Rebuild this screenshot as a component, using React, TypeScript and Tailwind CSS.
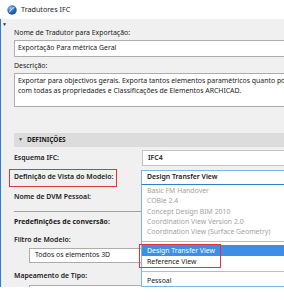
import React from 'react';

export default function App() {
  const items = [
    'Basic FM Handover',
    'COBie 2.4',
    'Concept Design BIM 2010',
    'Coordination View Version 2.0',
    'Coordination View (Surface Geometry)',
  ];

  return (
    <div className="w-[284px] h-[300px] bg-white overflow-hidden text-[6.9px] text-[#1a1a1a]" style={{ fontFamily: '"Noto Sans", "Open Sans", sans-serif' }}>
      {/* title bar */}
      <div className="h-[19px] flex items-center gap-[4px] pl-[7px] bg-white">
        <svg width="10" height="10" viewBox="0 0 10 10">
          <defs>
            <radialGradient id="g" cx="0.35" cy="0.3" r="0.8">
              <stop offset="0" stopColor="#8ec3f5" />
              <stop offset="0.5" stopColor="#2e6fc4" />
              <stop offset="1" stopColor="#173d80" />
            </radialGradient>
          </defs>
          <circle cx="5" cy="5" r="4.7" fill="url(#g)" />
          <path d="M2.6 7.2 C3.6 4.4 5.2 3 7.4 2.6" stroke="#fff" strokeWidth="0.9" fill="none" />
        </svg>
        <span className="text-[7.2px] text-[#222]">Tradutores IFC</span>
      </div>

      {/* body */}
      <div className="relative h-[268px] bg-[#f0f0f0] border-l border-[#2b7bd8]">
        <div className="absolute left-[1px] top-[2px] text-[5px] text-[#333]">▼</div>

        <div className="pl-[13px] pt-[8px] flex flex-col">
          <div className="h-[12px] leading-[12px]">Nome de Tradutor para Exportação:</div>
          <div className="mt-[1px] h-[17px] bg-white border border-[#adadad] border-r-0 flex items-center pl-[3px]">
            Exportação Para métrica Geral
          </div>
          <div className="mt-[3px] h-[12px] leading-[12px]">Descrição:</div>
          <div className="mt-[1px] h-[34px] bg-white border border-[#adadad] border-r-0 pl-[3px] pt-[2px] leading-[10px] whitespace-nowrap overflow-hidden">
            <div>Exportar para objectivos gerais. Exporta tantos elementos paramétricos quanto po</div>
            <div>com todas as propriedades e Classificações de Elementos ARCHICAD.</div>
          </div>

          <div className="mt-[26px] h-[14px] bg-[#dcdcdc] flex items-center gap-[4px] pl-[4px] font-bold text-[6.5px]">
            <span className="text-[5px] text-[#444]">▼</span>
            DEFINIÇÕES
          </div>

          <div className="mt-[3px] h-[16px] flex items-center">
            <div className="w-[128px] font-semibold">Esquema IFC:</div>
            <div className="flex-1 h-[16px] bg-white border border-[#c4c4c4] border-r-0 flex items-center pl-[5px] font-semibold">IFC4</div>
          </div>

          <div className="mt-[3px] h-[17px] flex items-center">
            <div className="w-[128px] flex">
              <div className="outline outline-[1.5px] outline-[#e2343c] -ml-[4px] pl-[4px] pr-[3px] h-[16px] flex items-center font-semibold">Definição de Vista do Modelo:</div>
            </div>
          </div>

          <div className="mt-[5px] h-[12px] flex items-center font-semibold">Nome de DVM Pessoal:</div>

          <div className="mt-[8px] h-px bg-[#a0a0a0] w-[128px]" />

          <div className="mt-[5px] h-[10px] flex items-center font-bold">Predefinições de conversão:</div>
          <div className="mt-[8px] h-[10px] flex items-center font-semibold">Filtro de Modelo:</div>
          <div className="mt-[3px] ml-[15px] w-[114px] h-[15px] bg-white border border-[#adadad] flex items-center pl-[5px]">
            Todos os elementos 3D
          </div>
          <div className="mt-[8px] h-[10px] flex items-center font-semibold">Mapeamento de Tipo:</div>
          <div className="mt-[4px] ml-[15px] w-[114px] h-[2px] bg-white border border-[#adadad] border-b-0" />
        </div>

        {/* open select */}
        <div className="absolute left-[140px] top-[151px] right-0 h-[15px] bg-white border border-[#7ab4ea] border-r-0 border-b-[#2a7fd4] flex items-center pl-[5px] font-semibold">
          Design Transfer View
        </div>
        <div className="absolute left-[140px] top-[166px] right-0 h-[102px] bg-white border border-[#7ab4ea] border-t-0 border-r-0 flex flex-col pt-[1px] text-[#a2a2a2]">
          {items.map(t => (
            <div key={t} className="h-[10.3px] leading-[10.3px] pl-[5px]">{t}</div>
          ))}
          <div className="h-[8px] flex items-center"><div className="h-px w-full bg-[#bdbdbd]" /></div>
          <div className="relative">
            <div className="h-[11px] leading-[11px] pl-[5px] bg-[#3d8ee8] text-white">Design Transfer View</div>
            <div className="h-[11px] leading-[11px] pl-[5px] text-[#1a1a1a]">Reference View</div>
            <div className="absolute -left-[3px] -top-[1px] w-[82px] h-[24px] border-[1.5px] border-[#e2343c]" />
          </div>
          <div className="h-[9px] flex items-center"><div className="h-px w-full bg-[#bdbdbd]" /></div>
          <div className="h-[10px] leading-[10px] pl-[5px] text-[#1a1a1a]">Pessoal</div>
        </div>
      </div>
    </div>
  );
}
